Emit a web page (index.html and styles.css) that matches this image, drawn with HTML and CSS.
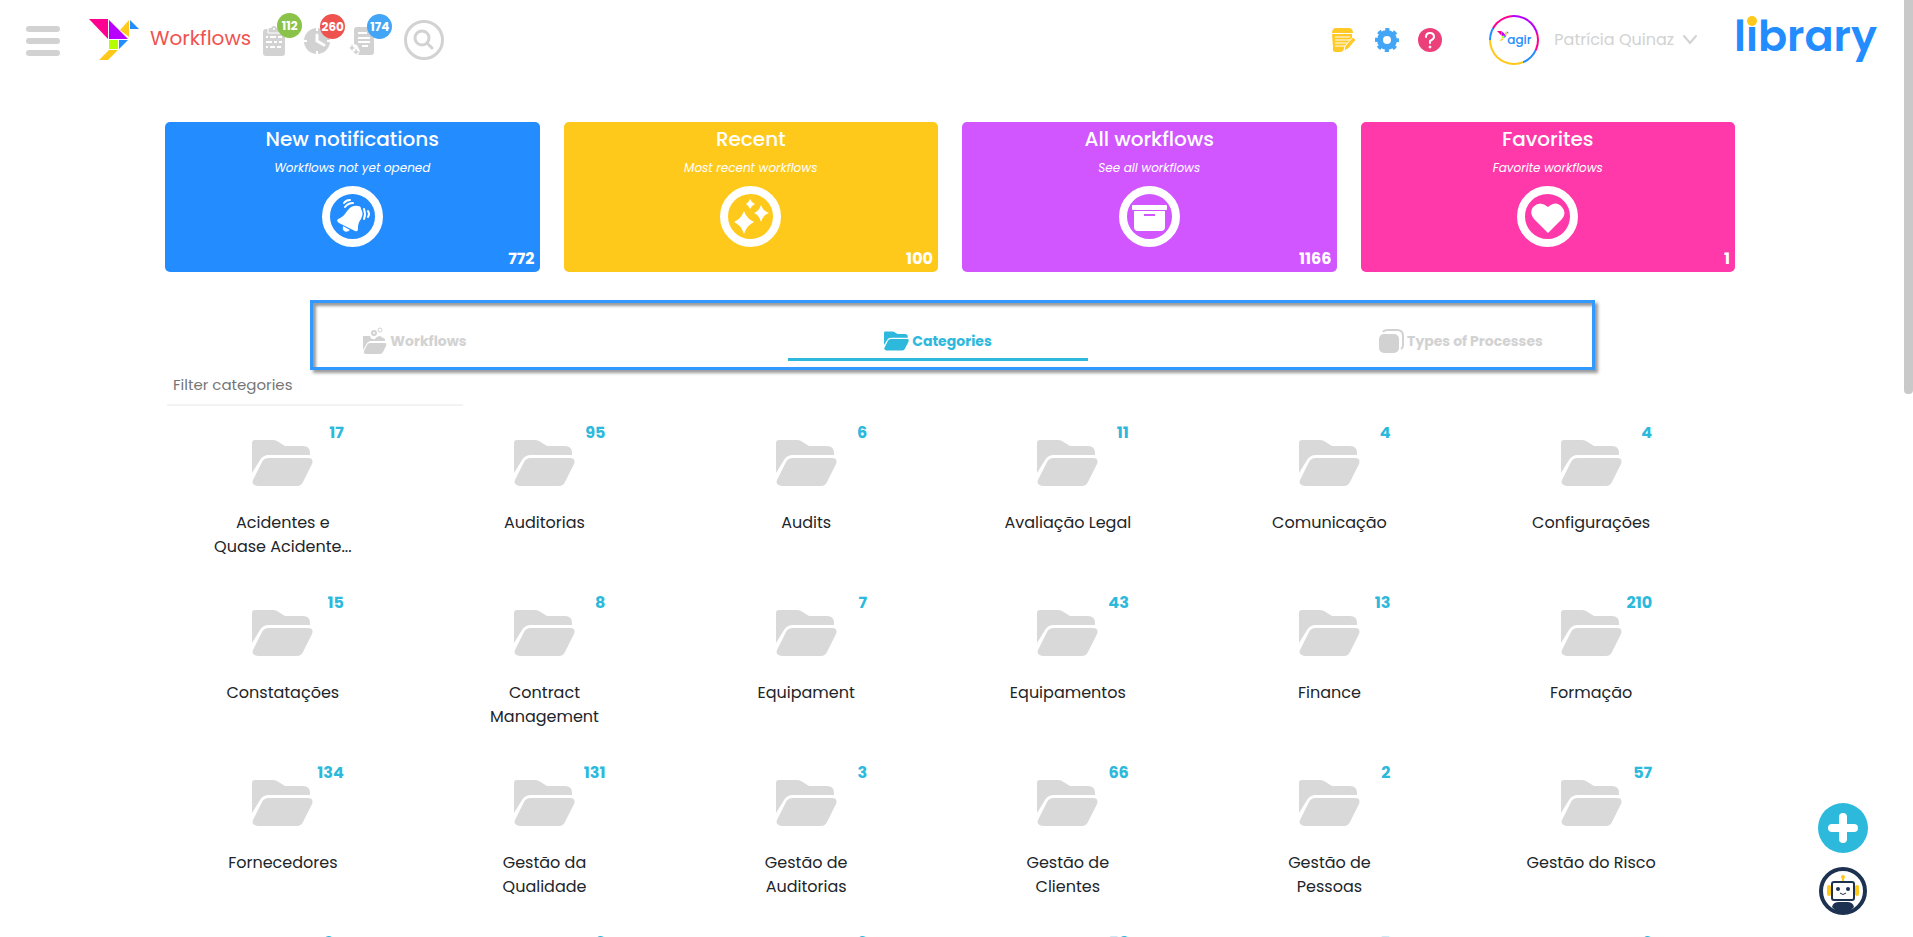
FILE: index.html
```html
<!DOCTYPE html>
<html lang="en">
<head>
    <title>Workflows</title>
    <meta charset="UTF-8">
    <meta name="viewport" content="width=device-width, initial-scale=1">
    <link rel="stylesheet" href="styles.css">
</head>
<body>
    <!-- shared icons -->
    <svg class="symbols" aria-hidden="true">
        <symbol id="folder" viewBox="0 0 61 46">
            <path d="M0 3Q0 0 3 0H21Q23 0 25 1L33 6H51Q58 6 58 13V15H17Q11 15 8 20L0 33Z"/>
            <path d="M17 18H56Q62 18 60 24L51 42Q49 46 45 46H6Q-1 45 1 40L10 22Q12 18 17 18Z"/>
        </symbol>
        <symbol id="bird" viewBox="0 0 50 42">
            <path fill="#ff0090" d="M0 0H19V20Z"/>
            <path fill="#b700ff" d="M20 1L39 20H20Z"/>
            <path fill="#ffc91c" d="M40 1V18L31 11Z"/>
            <path fill="#238cff" d="M41 1L50 10H41ZM30 21H39L30 30Z"/>
            <path fill="#b6ff00" d="M20 21H29V30H20Z"/>
            <path fill="#ffc91c" d="M20 31H29L19 41H10Z"/>
        </symbol>
    </svg>

    <header class="header">
        <button class="icon-btn menu-btn" type="button" aria-label="Menu"><span></span><span></span><span></span></button>
        <a class="brand" href="#" aria-label="Home"><svg width="50" height="42"><use href="#bird"/></svg></a>
        <h1 class="page-title">Workflows</h1>

        <div class="counters">
            <button class="icon-btn counter" type="button" aria-label="Tasks">
                <svg width="22" height="30" viewBox="0 0 22 30">
                    <path fill="#d2d2d2" d="M3 3H5Q6 2 8 2Q9 0 11 0Q13 0 14 2Q16 2 17 3H19Q22 3 22 6V27Q22 30 19 30H3Q0 30 0 27V6Q0 3 3 3Z"/>
                    <path fill="none" stroke="#fff" d="M5 3V7H17V3"/>
                    <path stroke="#fff" stroke-width="2" d="M3 11H5M7 11H13M15 11H19M3 16H9M11 16H14M16 16H19M3 21H5M7 21H12M14 21H18"/>
                    <circle cx="11" cy="3" r="1" fill="#fff"/>
                </svg>
                <span class="badge green">112</span>
            </button>
            <button class="icon-btn counter" type="button" aria-label="Late">
                <svg width="27" height="28" viewBox="0 0 27 28">
                    <circle cx="13" cy="14" r="13" fill="#d2d2d2"/>
                    <path fill="none" stroke="#fff" stroke-width="2" d="M13 0V4M13 24V28M0 14H3M23 14H27"/>
                    <path fill="none" stroke="#fff" stroke-width="3" stroke-linecap="round" d="M13 8V14L20 18"/>
                </svg>
                <span class="badge red">260</span>
            </button>
            <button class="icon-btn counter" type="button" aria-label="New">
                <svg width="24" height="28" viewBox="0 0 24 28">
                    <path fill="#d2d2d2" d="M4 3Q4 0 7 0H24V25Q24 28 21 28H8L10 24L7 18L4 17Z"/>
                    <path stroke="#fff" stroke-width="2" d="M8 6H17M8 11H20M8 15H20M12 19H18"/>
                    <path fill="#d2d2d2" d="M2 17L3 20L5 21L3 22L2 24L1 22L-1 21L1 20ZM6 21L7 24L10 25L7 26L6 28L5 26L3 25L5 24Z"/>
                </svg>
                <span class="badge blue">174</span>
            </button>
        </div>

        <button class="icon-btn search-btn" type="button" aria-label="Search">
            <svg width="20" height="20" viewBox="0 0 20 20" fill="none" stroke="#d2d2d2" stroke-width="3" stroke-linecap="round"><circle cx="8" cy="8" r="7"/><path d="M13 13L18 18"/></svg>
        </button>

        <div class="tools">
            <button class="icon-btn" type="button" aria-label="Notes">
                <svg width="24" height="24" viewBox="0 0 24 24">
                    <path fill="#ffc928" d="M3 0H18Q21 1 21 5H0Q0 1 3 0ZM0 6H20V12L12 21Q11 24 8 24H3Q0 23 1 20Z"/>
                    <path stroke="#fff" stroke-width="1" d="M3 9H18M3 12H18M3 15H15M3 18H13"/>
                    <path fill="#ffc928" stroke="#fff" d="M12 23L13 18L21 9L24 12L16 21Z"/>
                </svg>
            </button>
            <button class="icon-btn" type="button" aria-label="Settings">
                <svg width="24" height="24" viewBox="0 0 24 24">
                    <circle cx="12" cy="12" r="7" fill="none" stroke="#42a5f5" stroke-width="6"/>
                    <circle cx="12" cy="12" r="10" fill="none" stroke="#42a5f5" stroke-width="4" stroke-dasharray="4 3.854" stroke-dashoffset="2"/>
                </svg>
            </button>
            <button class="icon-btn" type="button" aria-label="Help">
                <svg width="24" height="24" viewBox="0 0 24 24">
                    <circle cx="12" cy="12" r="12" fill="#ec407a"/>
                    <path d="M8 9Q8 5 12 5Q16 5 16 9Q16 11 12 13V15" fill="none" stroke="#fff" stroke-width="2" stroke-linecap="round"/>
                    <circle cx="12" cy="19" r="1" fill="#fff" stroke="#fff"/>
                </svg>
            </button>
        </div>

        <button class="icon-btn user" type="button">
            <span class="avatar"><svg width="12" height="12"><use href="#bird"/></svg><span>agir</span></span>
            <span>Patrícia Quinaz</span>
            <svg width="16" height="10" viewBox="0 0 16 10" fill="none" stroke="#d2d2d2" stroke-width="2" stroke-linecap="round"><path d="M2 1L8 8L14 1"/></svg>
        </button>
        <a class="library" href="#">library</a>
    </header>

    <main class="container">
        <section class="cards">
            <a class="card card-blue" href="#">
                <h2>New notifications</h2>
                <p>Workflows not yet opened</p>
                <span class="ring">
                    <svg width="45" height="45" viewBox="0 0 45 45" fill="#fff">
                        <path d="M8 25C15 22 15 19 18 16Q22 11 28 12Q31 12 31 15Q34 19 31 25C28 29 28 32 28 35Q28 38 25 37L9 29Q6 27 8 25ZM13 32L20 36Q17 39 14 37Q12 35 13 32Z"/>
                        <path fill="none" stroke="#fff" stroke-width="2" stroke-linecap="round" d="M14 9Q16 6 20 6M15 13Q18 9 23 9M34 15Q36 20 34 25M38 17Q40 20 38 23"/>
                    </svg>
                </span>
                <strong>772</strong>
            </a>
            <a class="card card-yellow" href="#">
                <h2>Recent</h2>
                <p>Most recent workflows</p>
                <span class="ring">
                    <svg width="45" height="45" viewBox="0 0 45 45" fill="#fff">
                        <path d="M16 17Q19 25 26 28Q19 31 16 40Q13 31 6 28Q13 25 16 17ZM33 11Q35 17 41 19Q35 21 33 28Q31 21 26 19Q31 17 33 11ZM22 5Q23 8 27 10Q23 12 22 15Q21 12 18 10Q21 8 22 5Z"/>
                    </svg>
                </span>
                <strong>100</strong>
            </a>
            <a class="card card-purple" href="#">
                <h2>All workflows</h2>
                <p>See all workflows</p>
                <span class="ring">
                    <svg width="45" height="45" viewBox="0 0 45 45" fill="#fff">
                        <rect x="5" y="11" width="35" height="5" rx="1"/>
                        <path d="M7 17H38V33Q38 37 34 37H11Q7 37 7 33Z"/>
                        <path stroke="#d156ff" stroke-width="2" d="M17 21H28"/>
                    </svg>
                </span>
                <strong>1166</strong>
            </a>
            <a class="card card-pink" href="#">
                <h2>Favorites</h2>
                <p>Favorite workflows</p>
                <span class="ring">
                    <svg width="45" height="45" viewBox="0 0 45 45" fill="#fff">
                        <path d="M23 39L9 25Q4 19 8 13Q15 6 23 13Q31 6 37 13Q42 19 37 25Z"/>
                    </svg>
                </span>
                <strong>1</strong>
            </a>
        </section>

        <nav class="tabs">
            <a class="tab" href="#">
                <svg width="24" height="26" viewBox="0 0 24 26" fill="#d2d2d2">
                    <path d="M0 8H7Q8 12 12 11Q14 8 17 8L22 11V13H7Q4 14 3 17L0 22Z"/>
                    <path d="M7 15H22Q24 15 23 18L20 24Q19 26 17 26H3Q0 26 1 23L4 17Q5 15 7 15Z"/>
                    <circle cx="11" cy="5" r="2" fill="#fff" stroke="#d2d2d2" stroke-width="2"/>
                    <circle cx="17" cy="2" r="2" fill="#fff" stroke="#d2d2d2"/>
                </svg>
                Workflows
            </a>
            <a class="tab active" href="#">
                <svg width="25" height="20" fill="#2cb9dc"><use href="#folder"/></svg>
                Categories
            </a>
            <a class="tab" href="#">
                <svg width="25" height="24" viewBox="0 0 25 24">
                    <rect x="0" y="5" width="20" height="19" rx="5" fill="#d2d2d2"/>
                    <path d="M4 3Q5 1 9 1H18Q24 1 24 7V16Q24 19 22 20" fill="none" stroke="#d2d2d2" stroke-width="2"/>
                </svg>
                Types of Processes
            </a>
            <div class="highlight"></div>
        </nav>

        <input class="filter" type="text" placeholder="Filter categories" aria-label="Filter categories">

        <div class="categories">
            <a class="category" href="#"><b>17</b><svg class="folder"><use href="#folder"/></svg><span>Acidentes e Quase Acidente...</span></a>
            <a class="category" href="#"><b>95</b><svg class="folder"><use href="#folder"/></svg><span>Auditorias</span></a>
            <a class="category" href="#"><b>6</b><svg class="folder"><use href="#folder"/></svg><span>Audits</span></a>
            <a class="category" href="#"><b>11</b><svg class="folder"><use href="#folder"/></svg><span>Avaliação Legal</span></a>
            <a class="category" href="#"><b>4</b><svg class="folder"><use href="#folder"/></svg><span>Comunicação</span></a>
            <a class="category" href="#"><b>4</b><svg class="folder"><use href="#folder"/></svg><span>Configurações</span></a>

            <a class="category" href="#"><b>15</b><svg class="folder"><use href="#folder"/></svg><span>Constatações</span></a>
            <a class="category" href="#"><b>8</b><svg class="folder"><use href="#folder"/></svg><span>Contract Management</span></a>
            <a class="category" href="#"><b>7</b><svg class="folder"><use href="#folder"/></svg><span>Equipament</span></a>
            <a class="category" href="#"><b>43</b><svg class="folder"><use href="#folder"/></svg><span>Equipamentos</span></a>
            <a class="category" href="#"><b>13</b><svg class="folder"><use href="#folder"/></svg><span>Finance</span></a>
            <a class="category" href="#"><b>210</b><svg class="folder"><use href="#folder"/></svg><span>Formação</span></a>

            <a class="category" href="#"><b>134</b><svg class="folder"><use href="#folder"/></svg><span>Fornecedores</span></a>
            <a class="category" href="#"><b>131</b><svg class="folder"><use href="#folder"/></svg><span>Gestão da Qualidade</span></a>
            <a class="category" href="#"><b>3</b><svg class="folder"><use href="#folder"/></svg><span>Gestão de Auditorias</span></a>
            <a class="category" href="#"><b>66</b><svg class="folder"><use href="#folder"/></svg><span>Gestão de Clientes</span></a>
            <a class="category" href="#"><b>2</b><svg class="folder"><use href="#folder"/></svg><span>Gestão de Pessoas</span></a>
            <a class="category" href="#"><b>57</b><svg class="folder"><use href="#folder"/></svg><span>Gestão do Risco</span></a>

            <a class="category" href="#"><b>24</b><svg class="folder"><use href="#folder"/></svg></a>
            <a class="category" href="#"><b>6</b><svg class="folder"><use href="#folder"/></svg></a>
            <a class="category" href="#"><b>3</b><svg class="folder"><use href="#folder"/></svg></a>
            <a class="category" href="#"><b>59</b><svg class="folder"><use href="#folder"/></svg></a>
            <a class="category" href="#"><b>5</b><svg class="folder"><use href="#folder"/></svg></a>
            <a class="category" href="#"><b>3</b><svg class="folder"><use href="#folder"/></svg></a>
        </div>
    </main>

    <div class="floating">
        <button class="icon-btn" type="button" aria-label="Add">
            <svg width="50" height="50" viewBox="0 0 50 50">
                <circle cx="25" cy="25" r="25" fill="#2cb9dc"/>
                <path d="M25 14V36M14 25H36" stroke="#fff" stroke-width="8" stroke-linecap="round"/>
            </svg>
        </button>
        <button class="icon-btn" type="button" aria-label="Assistant">
            <svg width="48" height="48" viewBox="0 0 48 48">
                <circle cx="24" cy="24" r="22" fill="#fff" stroke="#1d3150" stroke-width="4"/>
                <path fill="#1d3150" d="M13 40Q14 35 20 35H28Q34 35 35 40Q30 46 24 46Q18 46 13 40Z"/>
                <rect x="8" y="18" width="4" height="11" rx="2" fill="#ffc91c"/>
                <rect x="36" y="18" width="4" height="11" rx="2" fill="#ffc91c"/>
                <path d="M24 14V10" stroke="#ffc91c" stroke-width="2"/>
                <circle cx="24" cy="10" r="2" fill="#ffc91c"/>
                <rect x="13" y="15" width="22" height="18" rx="2" fill="#fff" stroke="#1d3150" stroke-width="2"/>
                <circle cx="19" cy="22" r="2" fill="#1d3150"/>
                <circle cx="29" cy="22" r="2" fill="#1d3150"/>
                <path d="M21 26Q24 29 27 26" fill="none" stroke="#1d3150"/>
            </svg>
        </button>
    </div>
    <div class="scroll-thumb"></div>
</body>
</html>
```
FILE: styles.css
```css
* {
    box-sizing: border-box;
}

html, body {
    margin: 0;
    padding: 0;
    height: 100%;
    overflow: hidden;
    background: #ffffff;
}

body {
    color: #212529;
    font-family: Poppins, Inter, sans-serif;
    font-size: 16px;
    line-height: 24px;
}

a {
    color: inherit;
    text-decoration: none;
}

svg {
    display: block;
    flex: none;
    overflow: visible;
}

.symbols {
    position: absolute;
    width: 0;
    height: 0;
}

.icon-btn {
    padding: 0;
    border: none;
    background: none;
    color: inherit;
    font: inherit;
    cursor: pointer;
}

/* header */
.header {
    display: flex;
    align-items: center;
    height: 80px;
    padding: 0 36px 0 26px;
}

.menu-btn {
    display: flex;
    flex-direction: column;
    gap: 6px;
    width: 34px;
    margin: 2px 29px 0 0;
}

.menu-btn span {
    height: 6px;
    border-radius: 3px;
    background: #d2d2d2;
}

.page-title {
    margin: 0 12px 4px 11px;
    color: #ef5350;
    font-size: 20px;
    font-weight: 400;
}

.counters {
    display: flex;
    align-items: center;
    gap: 19px;
    padding-top: 2px;
}

.counter {
    position: relative;
}

.badge {
    position: absolute;
    top: -13px;
    right: -17px;
    width: 25px;
    height: 25px;
    border-radius: 50%;
    color: #ffffff;
    font-size: 12px;
    font-weight: 700;
    line-height: 25px;
    text-align: center;
}

.green {
    background: #8bc34a;
}

.red {
    right: -14px;
    background: #ef5350;
}

.blue {
    right: -18px;
    background: #42a5f5;
}

.search-btn {
    display: flex;
    align-items: center;
    justify-content: center;
    width: 40px;
    height: 40px;
    margin-left: 30px;
    border: 3px solid #d2d2d2;
    border-radius: 50%;
}

.tools {
    display: flex;
    gap: 19px;
    margin-left: auto;
}

.user {
    display: flex;
    align-items: center;
    margin: 0 36px 0 47px;
    color: #d2d2d2;
}

.avatar {
    display: flex;
    align-items: center;
    justify-content: center;
    width: 50px;
    height: 50px;
    margin-right: 15px;
    border: 2px solid transparent;
    border-radius: 50%;
    background: linear-gradient(#ffffff, #ffffff) padding-box,
        conic-gradient(#b700ff 0 20%, #ff0090 20% 32%, #238cff 32% 44%, #ffc91c 44% 75%, #238cff 75% 83%, #ff0090 83% 98%, #b700ff 98%) border-box;
    color: #238cff;
    font-size: 12px;
    font-weight: 500;
}

.avatar svg {
    margin: 0 -2px 8px 0;
}

.user > svg {
    margin-left: 8px;
}

.library {
    position: relative;
    margin-bottom: 8px;
    color: #238cff;
    font-size: 43px;
    font-weight: 600;
    line-height: 64px;
}

/* yellow dot of the i */
.library::after {
    content: "";
    position: absolute;
    top: 12px;
    left: 13px;
    width: 10px;
    height: 10px;
    border-radius: 50%;
    background: #ffc91c;
}

/* cards */
.container {
    padding: 42px 178px 0 165px;
}

.cards {
    display: grid;
    grid-template-columns: repeat(4, 1fr);
    gap: 24px;
}

.card {
    display: flex;
    flex-direction: column;
    align-items: center;
    min-height: 150px;
    border-radius: 5px;
    color: #ffffff;
}

.card h2 {
    margin: 0;
    font-size: 20px;
    font-weight: 500;
    line-height: 34px;
}

.card p {
    margin: 0 0 6px;
    font-size: 12px;
    font-style: italic;
}

.card strong {
    align-self: flex-end;
    padding-right: 5px;
}

.ring {
    border: 8px solid #ffffff;
    border-radius: 50%;
}

.card-blue {
    background: #238cff;
}

.card-yellow {
    background: #ffc91c;
}

.card-purple {
    background: #d156ff;
}

.card-pink {
    background: #ff39aa;
}

/* tabs */
.tabs {
    position: relative;
    display: flex;
    justify-content: space-between;
    margin: 48px 124px 0 100px;
}

.tab {
    display: flex;
    align-items: center;
    justify-content: center;
    gap: 3px;
    width: 300px;
    height: 41px;
    padding-top: 4px;
    border-bottom: 3px solid transparent;
    color: #d2d2d2;
    font-size: 14px;
    font-weight: 700;
}

.tab.active {
    border-color: #2cb9dc;
    color: #2cb9dc;
}

.highlight {
    position: absolute;
    top: -20px;
    right: 16px;
    bottom: -9px;
    left: 45px;
    border: 3px solid #3399ff;
    box-shadow: 3px 3px 3px rgba(0, 0, 0, 0.4), inset 3px 3px 3px rgba(0, 0, 0, 0.4);
    pointer-events: none;
}

.filter {
    display: block;
    width: 296px;
    height: 42px;
    margin: 3px 0 15px 2px;
    padding: 0 6px;
    border: none;
    border-bottom: 2px solid #f3f3f3;
    background: transparent;
    font-family: inherit;
    font-size: 15px;
}

.filter::placeholder {
    color: #757575;
}

/* categories */
.categories {
    display: grid;
    grid-template-columns: repeat(6, 1fr);
    grid-auto-rows: 170px;
    margin: 0 13px 0 -13px;
}

.category {
    display: flex;
    flex-direction: column;
    align-items: center;
}

.category b {
    width: 122px;
    height: 19px;
    color: #2cb9dc;
    text-align: right;
}

.category span {
    width: 142px;
    text-align: center;
}

.folder {
    width: 61px;
    height: 46px;
    margin-bottom: 25px;
    fill: #d9d9d9;
}

/* buttons over the page */
.floating {
    position: fixed;
    right: 45px;
    bottom: 22px;
    display: flex;
    flex-direction: column;
    align-items: center;
    gap: 14px;
}

.scroll-thumb {
    position: fixed;
    top: 0;
    right: 0;
    width: 9px;
    height: 42%;
    border-radius: 0 0 4px 4px;
    background: #c9c9c9;
}
```
